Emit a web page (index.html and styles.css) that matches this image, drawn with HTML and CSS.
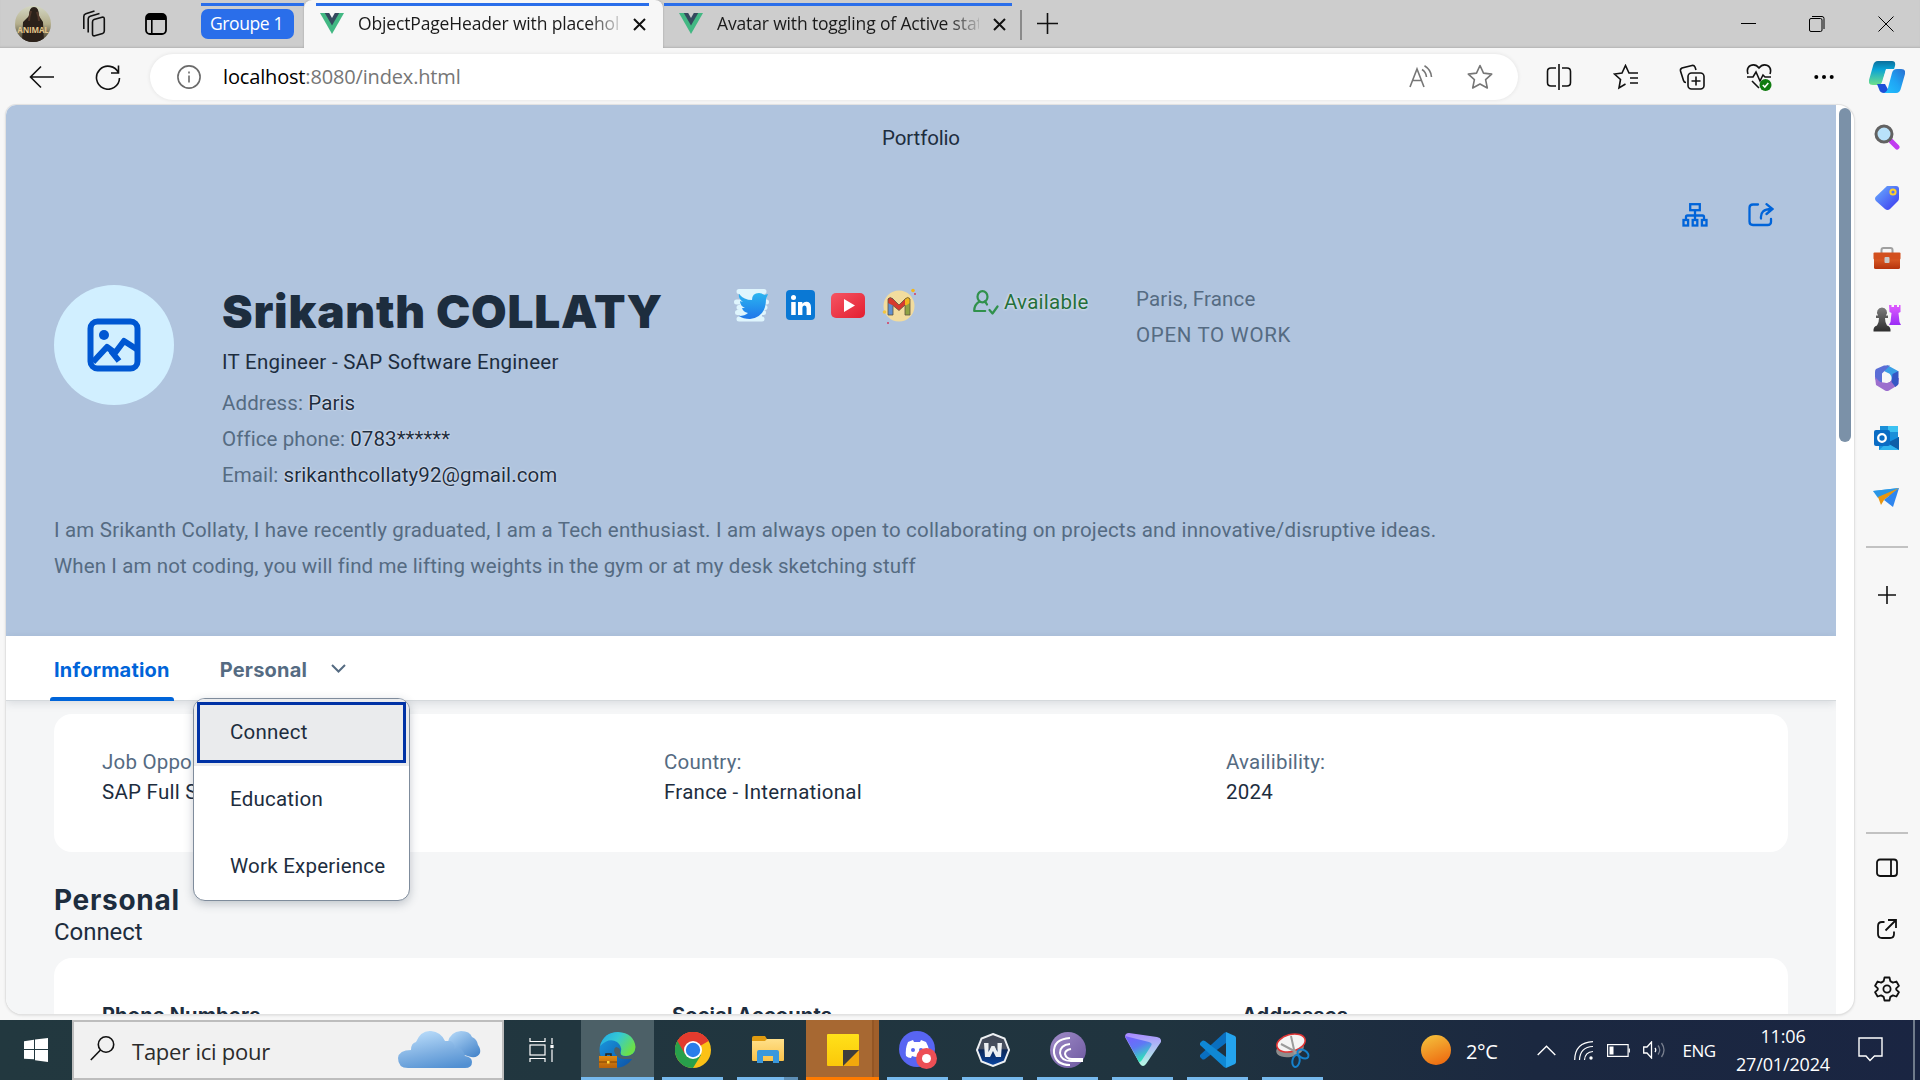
FILE: index.html
```
<!DOCTYPE html>
<html lang="fr">
<head>
<meta charset="utf-8">
<title>ObjectPageHeader with placeholder</title>
<link rel="stylesheet" href="styles.css">
</head>
<body>
<svg class="defs" width="0" height="0">
  <defs>
    <linearGradient id="g-cop1" x1="0" y1="0" x2="0" y2="1"><stop offset="0" stop-color="#0b6f9c"/><stop offset=".35" stop-color="#09a3d6"/><stop offset="1" stop-color="#6fe08a"/></linearGradient>
    <linearGradient id="g-cop2" x1="1" y1="0" x2="0" y2="1"><stop offset="0" stop-color="#2a6fd0"/><stop offset=".5" stop-color="#1fa4f4"/><stop offset="1" stop-color="#22c3ff"/></linearGradient>
    <linearGradient id="g-tag" x1="0" y1="0" x2="1" y2="1"><stop offset="0" stop-color="#6bb2ff"/><stop offset="1" stop-color="#3a35ee"/></linearGradient>
    <linearGradient id="g-box" x1="0" y1="0" x2="0" y2="1"><stop offset="0" stop-color="#e0622a"/><stop offset="1" stop-color="#b5330c"/></linearGradient>
    <linearGradient id="g-pawn" x1="0" y1="0" x2="0" y2="1"><stop offset="0" stop-color="#7c7c7c"/><stop offset="1" stop-color="#2d2d2d"/></linearGradient>
    <linearGradient id="g-rook" x1="0" y1="0" x2="0" y2="1"><stop offset="0" stop-color="#e05bff"/><stop offset="1" stop-color="#9a2cf5"/></linearGradient>
    <linearGradient id="g-edge" x1="0" y1="0" x2="1" y2=".5"><stop offset="0" stop-color="#1fa7e8"/><stop offset=".5" stop-color="#35c9d4"/><stop offset="1" stop-color="#6be04a"/></linearGradient>
    <linearGradient id="g-edge2" x1="0" y1="0" x2="1" y2="1"><stop offset="0" stop-color="#1b9de2"/><stop offset="1" stop-color="#0c4fa5"/></linearGradient>
    <linearGradient id="g-case" x1="0" y1="0" x2="0" y2="1"><stop offset="0" stop-color="#e08a12"/><stop offset="1" stop-color="#b8620a"/></linearGradient>
    <linearGradient id="g-fold" x1="0" y1="0" x2="0" y2="1"><stop offset="0" stop-color="#ffe08a"/><stop offset="1" stop-color="#fbc34a"/></linearGradient>
    <linearGradient id="g-note" x1="0" y1="0" x2="0" y2="1"><stop offset="0" stop-color="#ffe11a"/><stop offset="1" stop-color="#fbc80a"/></linearGradient>
    <linearGradient id="g-bit" x1="0" y1="0" x2="1" y2="1"><stop offset="0" stop-color="#a08cc8"/><stop offset="1" stop-color="#6d58a0"/></linearGradient>
    <linearGradient id="g-vpn" x1="0" y1="0" x2=".5" y2="1"><stop offset="0" stop-color="#7a5cff"/><stop offset=".5" stop-color="#5f78f5"/><stop offset="1" stop-color="#2fe6b8"/></linearGradient>
    <linearGradient id="g-vpn2" x1=".4" y1="0" x2=".5" y2="1"><stop offset="0" stop-color="#a98bff"/><stop offset="1" stop-color="#b5fbe4"/></linearGradient>
    <linearGradient id="g-sun" x1=".3" y1="0" x2=".7" y2="1"><stop offset="0" stop-color="#f4bd3a"/><stop offset="1" stop-color="#ee6a10"/></linearGradient>
    <linearGradient id="g-cloud" x1=".3" y1="0" x2=".7" y2="1"><stop offset="0" stop-color="#b9dcfa"/><stop offset=".55" stop-color="#7fb0e2"/><stop offset="1" stop-color="#5290d2"/></linearGradient>
    <linearGradient id="g-cloud2" x1="0" y1="0" x2=".8" y2="1"><stop offset="0" stop-color="#b9dcfa"/><stop offset="1" stop-color="#4a88cc"/></linearGradient>
    <linearGradient id="g-bird" x1="0" y1="0" x2="0" y2="1"><stop offset="0" stop-color="#2bb5f0"/><stop offset="1" stop-color="#1e76ea"/></linearGradient>
    <linearGradient id="g-tube" x1="0" y1="0" x2="1" y2="1"><stop offset="0" stop-color="#f55563"/><stop offset="1" stop-color="#e31e30"/></linearGradient>
    <linearGradient id="g-photo" x1="0" y1="0" x2="0" y2="1"><stop offset="0" stop-color="#d3d6c2"/><stop offset=".5" stop-color="#b4ae8c"/><stop offset="1" stop-color="#332b1d"/></linearGradient>
    <linearGradient id="g-w" x1="0" y1="0" x2="0" y2="1"><stop offset="0" stop-color="#3d4452"/><stop offset=".45" stop-color="#4a5262"/><stop offset=".5" stop-color="#0b2757"/><stop offset="1" stop-color="#0a47a5"/></linearGradient>
    <clipPath id="c-photo"><circle cx="18" cy="18" r="18"/></clipPath>
  </defs>
</svg>

<div class="tabstrip">
  <div class="cell w66 profile"><svg width="36" height="36"><g clip-path="url(#c-photo)"><rect width="36" height="36" fill="url(#g-photo)"/><path d="M14 10q0-9 5-9t5 9l4 6 1 20H7l1-20z" fill="#2b211a"/><path d="M16 5q-2 6-2 10M22 6q2 5 2 9" stroke="#51372a" stroke-width="2" fill="none"/><text x="18" y="27" text-anchor="middle" class="photo-text">ANIMAL</text></g></svg></div>
  <div class="cell w54"><svg class="ln" width="26" height="28" viewBox="0 0 26 28"><path d="M14 9.500l8-2.300q2.300-.5 2.300 1.800v12q0 1.800-1.700 2.400l-7.800 2.400q-2.300.5-2.300-1.800V12q0-2 1.500-2.500zM8.200 22.500V9q0-2.200 2-2.800l9.300-2.600M3.800 19V6.500q0-2.200 2-2.800L14.500 1"/></svg></div>
  <div class="cell w72"><svg width="22" height="22"><rect x="1" y="1" width="20" height="20" rx="4" fill="none" stroke="#000" stroke-width="1.800"/><path d="M1 7V5a4 4 0 0 1 4-4h12a4 4 0 0 1 4 4v2zM6 7h1.600v14H6z"/></svg></div>
  <div class="group"><span>Groupe 1</span></div>
  <div class="tab active">
    <svg class="vue" width="24" height="21" viewBox="0 0 24 21"><path d="M0 0h24L12 21z" fill="#42b883"/><path d="M4.800 0h14.400L12 12.500z" fill="#35495e"/><path d="M9.200 0h5.600L12 5z" fill="#f7f7f7"/></svg>
    <span class="tab-title">ObjectPageHeader with placeholder</span>
    <svg class="ln" width="13" height="13"><path d="M1 1l11 11M12 1L1 12"/></svg>
  </div>
  <div class="tab">
    <svg class="vue" width="24" height="21" viewBox="0 0 24 21"><path d="M0 0h24L12 21z" fill="#42b883"/><path d="M4.800 0h14.400L12 12.500z" fill="#35495e"/><path d="M9.200 0h5.600L12 5z" fill="#cdcdcd"/></svg>
    <span class="tab-title">Avatar with toggling of Active state</span>
    <svg class="ln" width="13" height="13"><path d="M1 1l11 11M12 1L1 12"/></svg>
  </div>
  <i class="tab-sep"></i>
  <div class="newtab"><svg class="ln" width="21" height="21"><path d="M10.500 0v21M0 10.500h21"/></svg></div>
  <div class="window-buttons">
    <svg width="15" height="16"><path d="M0 7.500h15" stroke="#000"/></svg>
    <svg width="16" height="16" fill="none" stroke="#000"><rect x=".5" y="2.500" width="12.500" height="13" rx="1.500"/><path d="M3 .5h10q2 0 2 2v10.500"/></svg>
    <svg width="16" height="16"><path d="M.5.5l15 15M15.500.5l-15 15" stroke="#000"/></svg>
  </div>
</div>

<div class="toolbar">
  <div class="cell w84"><svg class="ln" width="26" height="24" viewBox="0 0 26 24"><path d="M25 12H1.500M12 1.500L1.500 12 12 22.500"/></svg></div>
  <div class="cell w48"><svg class="ln" width="26" height="26" viewBox="0 0 26 26"><path d="M23.500 9A11.500 11.500 0 1 0 24.500 14M23.500 1.500V9H16"/></svg></div>
  <div class="address">
    <svg width="24" height="24" fill="none" stroke="#6b6b6b" stroke-width="1.600"><circle cx="12" cy="12" r="11.100"/><path d="M12 10.500v7M12 6.500v2"/></svg>
    <span class="url"><b>localhost</b>:8080/index.html</span>
    <svg class="read" width="24" height="24" fill="none" stroke="#767676" stroke-width="1.600"><path d="M1 22L8 4l7 18M3.500 15.500h9M13 4.500q4 2.500 4.500 7.500M15.500.8q6.500 4 7 11.200"/></svg>
    <svg width="26" height="26" viewBox="0 0 26 26" fill="none" stroke="#767676" stroke-width="1.600" stroke-linejoin="round"><path d="M13 1.500l3.500 7.600 8.200 1-6.100 5.600 1.700 8.300L13 20l-7.300 4 1.700-8.300-6.100-5.600 8.200-1z"/></svg>
  </div>
  <div class="tools">
    <svg class="ln" width="26" height="26" viewBox="0 0 26 26"><path d="M13 0v26M10 4H5Q1.500 4 1.500 7.500v11Q1.500 22 5 22h5M16 4h5q3.500 0 3.500 3.500v11Q24.500 22 21 22h-5"/></svg>
    <svg class="ln" width="26" height="26" viewBox="0 0 26 26"><path d="M12.500 20L6 24l1.500-8.500L1.500 10l7.500-1 3.500-7.500L16 9h9M17 14h8M17 19h8"/></svg>
    <svg class="ln" width="26" height="26" viewBox="0 0 26 26"><rect x="9" y="9" width="16" height="16" rx="3.500"/><path d="M17 12.500v9M12.500 17h9M17 6l-1-3q-1-2-3-1.500L3 4Q1 5 1.500 7l3 9.500Q5 18.500 7 18.500"/></svg>
    <svg class="ln" width="26" height="28" viewBox="0 0 26 28"><path d="M2 11Q0 5 4.500 2.500q5-2 8.500 2.500 3.500-4.500 8.500-2.500Q26 5 24 11M1 14h6l3-5 4 9 3-6 2 2h6M6 18l7 7"/><circle cx="19.500" cy="22" r="6" fill="#107c10" stroke="none"/><path d="M16.800 22l2 2 3.500-4" stroke="#fff"/></svg>
    <svg width="20" height="6"><circle cx="2.300" cy="3" r="2"/><circle cx="10" cy="3" r="2"/><circle cx="17.700" cy="3" r="2"/></svg>
  </div>
  <div class="copilot"><svg width="36" height="32" viewBox="0 0 36 32"><path d="M9 0h14q4 0 3 5l-1 3h-8l-4 13q-1 3-4 3H4q-5 0-4-5L4 5q1-5 5-5z" fill="url(#g-cop1)"/><path d="M8 23h8l5 9H15q-4 0-5-4z" fill="#1d4fd8"/><path d="M27 32H15q3-1 4-5l4-15q1-4 5-4h4q5 0 4 5l-4 14q-1 5-5 5z" fill="url(#g-cop2)"/><path d="M17 9h5l-4 14h-5z" fill="#f7f7f7"/></svg></div>
</div>

<div class="main">
  <div class="viewport">
    <div class="page">
      <header class="hero">
        <div class="hero-title">Portfolio</div>
        <div class="hero-actions">
          <svg width="26" height="24" viewBox="0 0 26 24" fill="none" stroke="#0064d9" stroke-width="2.300"><rect x="8.200" y="1.200" width="9.600" height="6"/><path d="M13 7.200v10M4 17v-3q0-1.500 1.500-1.500h15q1.500 0 1.500 1.500v3"/><rect x="1.500" y="17" width="4.600" height="5.500"/><rect x="10.700" y="17" width="4.600" height="5.500"/><rect x="19.900" y="17" width="4.600" height="5.500"/></svg>
          <svg width="26" height="24" viewBox="0 0 26 24" fill="none" stroke="#0064d9" stroke-width="2.300" stroke-linecap="round"><path d="M10 1.500H5q-3.500 0-3.500 3.500v13.500Q1.500 22 5 22h14.500q3.500 0 3.500-3v-3M13 15.500Q12 6 23.500 6M18.500 1.200L24.500 6l-6 5"/></svg>
        </div>
        <div class="hero-body">
          <div class="avatar"><svg width="54" height="54" viewBox="0 0 54 54" fill="none" stroke="#0057d2" stroke-width="6"><rect x="3.500" y="3.500" width="47" height="47" rx="7"/><path d="M6 44l14-15 8 6 9-12 14 9M24 33l8 10" stroke-linejoin="round"/><circle cx="17" cy="17" r="5" fill="#0057d2" stroke="none"/></svg></div>
          <div class="identity">
            <h1>Srikanth COLLATY</h1>
            <p class="job">IT Engineer - SAP Software Engineer</p>
            <p class="attr">Address: <b>Paris</b></p>
            <p class="attr">Office phone: <b>0783******</b></p>
            <p class="attr">Email: <b>srikanthcollaty92@gmail.com</b></p>
          </div>
          <div class="social">
            <svg width="36" height="33" viewBox="0 0 36 33"><path d="M5 2.500h25M8 8h22M2.500 13h30M5 18.500h26M3.500 23.500h26M5 30h23" stroke="#dff5fd" stroke-width="5" stroke-linecap="round"/><path d="M6 2h22v28H6z" fill="#dff5fd"/><path d="M5 5q5 6 13 6 0-7 7-7 3 0 5 2l4-1-2 5q0 18-16 20-7 0-11-3 6 0 9-3-5-1-6-5h3q-5-2-5-7l3 1Q4 10 5 5z" fill="url(#g-bird)"/></svg>
            <svg width="29" height="30"><rect width="29" height="30" rx="4" fill="#0a78d4"/><circle cx="7.500" cy="7.500" r="2.500" fill="#fff"/><path d="M5.200 12h4.500v13H5.200zM12 12h4.300v1.800q1.500-2.100 4-2.100 4.700 0 4.700 5.800V25h-4.400v-6.800q0-2.700-2-2.700-2.200 0-2.200 2.800V25H12z" fill="#fff"/></svg>
            <svg width="34" height="25"><rect width="34" height="25" rx="5" fill="url(#g-tube)"/><path d="M13 6v13l11-6.500z" fill="#fff"/></svg>
            <svg width="34" height="36"><circle cx="17" cy="18" r="15.500" fill="#f2dc9e"/><path d="M6 27V10h5v17z" fill="#5f8fd0"/><path d="M23 27V10h5v17z" fill="#8fa243"/><path d="M6 15v-4q2-3 5 0l6 6 6-6v6l-6 5.500-6-5z" fill="#d63a2e"/><path d="M23 10.500q5-3 5 1V15l-5 3z" fill="#f2b51e"/><path d="M6 27V11q2-3 5 0l6 6 6-6q3-3 5 0v16h-5V17l-6 5.500-6-5V27z" fill="none" stroke="#5d5340" stroke-width=".8"/><circle cx="31" cy="2.500" r="1.800" fill="#f2b51e"/><circle cx="2.500" cy="24" r="1.800" fill="#f2c43e"/><circle cx="33" cy="6" r="1" fill="#d63a5e"/><circle cx="6" cy="35" r="1" fill="#d63a5e"/></svg>
          </div>
          <div class="status"><svg width="26" height="25" viewBox="0 0 26 25" fill="none" stroke="#30914c" stroke-width="2.200" stroke-linecap="round" stroke-linejoin="round"><ellipse cx="9.500" cy="6.800" rx="5" ry="5.600"/><path d="M6.500 11.500Q1.200 14.500 1.200 21h11M14 14.500q-1-2-2.500-3M16.500 20l3 3.500 5-7"/></svg><span>Available</span></div>
          <div class="place"><p>Paris, France</p><p>OPEN TO WORK</p></div>
        </div>
        <div class="bio"><p>I am Srikanth Collaty, I have recently graduated, I am a Tech enthusiast. I am always open to collaborating on projects and innovative/disruptive ideas.</p><p>When I am not coding, you will find me lifting weights in the gym or at my desk sketching stuff</p></div>
      </header>
      <nav class="anchors">
        <a class="selected">Information</a>
        <a>Personal</a>
        <svg width="15" height="9" viewBox="0 0 15 9"><path d="M1 1l6.500 6.500L14 1" fill="none" stroke="#556b82" stroke-width="2"/></svg>
        <div class="menu">
          <div class="menu-item focus">Connect</div>
          <div class="menu-item">Education</div>
          <div class="menu-item">Work Experience</div>
        </div>
      </nav>
      <section class="card facts">
        <div><span>Job Opportunity:</span><b>SAP Full Stack</b></div>
        <div><span>Country:</span><b>France - International</b></div>
        <div><span>Availibility:</span><b>2024</b></div>
      </section>
      <h2>Personal</h2>
      <h3>Connect</h3>
      <section class="card contacts">
        <h4>Phone Numbers</h4><h4>Social Accounts</h4><h4>Addresses</h4>
      </section>
    </div>
    <div class="scroll"><i></i></div>
  </div>

  <aside class="sidebar">
    <div class="slot s60"><svg width="26" height="26" viewBox="0 0 26 26"><path d="M17 17l6 6" stroke="#c13cf0" stroke-width="5" stroke-linecap="round"/><circle cx="10" cy="10" r="8" fill="#b9e2fa" stroke="#626262" stroke-width="3"/></svg></div>
    <div class="slot s60"><svg width="26" height="26" viewBox="0 0 26 26"><path d="M13 1h9q3 0 3 3v9q0 2-1 3l-8 8q-2.500 2-5 0l-9-8q-2-2.500 0-4.500z" fill="url(#g-tag)"/><circle cx="19" cy="7" r="2.600" fill="none" stroke="#ffd02a" stroke-width="2"/></svg></div>
    <div class="slot s60"><svg width="28" height="22" viewBox="0 0 28 22"><path d="M8.500 6V3q0-2 2-2h7q2 0 2 2v3" fill="none" stroke="#a0a0a0" stroke-width="2"/><rect x="1" y="10" width="26" height="12" rx="1.500" fill="url(#g-box)"/><rect x=".5" y="5.500" width="27" height="7" rx="1" fill="#d3501e"/><rect x="11.500" y="10" width="5" height="6" rx="1" fill="#c9c9c9"/></svg></div>
    <div class="slot s60"><svg width="28" height="28" viewBox="0 0 28 28"><path d="M16 1h2.500v2H21V1h3v2h2V1h1.500v7l-2 1 1 9 1.500 3h-12l1.500-3 1-9-2-1z" fill="url(#g-rook)"/><path d="M9 3.500a5 5 0 0 1 4 8h2v2.500h-3q0 5 2 7.500 4 1 3.500 6h-17q-.5-5 3.500-6 2-2.500 2-7.500H3v-2.500h2a5 5 0 0 1 4-8z" fill="url(#g-pawn)"/></svg></div>
    <div class="slot s60"><svg width="26" height="28" viewBox="0 0 26 28"><path d="M13 1l11 6v7l-7 2-1-6-6-3z" fill="#3ba0e6"/><path d="M10 1.500h6l-8 8v10L2 16Q1 15 1 13V8q0-2 1-3z" fill="#5b6ed6"/><path d="M1 13l1 8 9 5.500q2 1 4 0l9-5.500 1-7-6 1-6 4-7-1z" fill="#9c6fce"/><path d="M24.500 7v13l-3 3-4-5 1-8z" fill="#3557c4"/><circle cx="13" cy="14" r="4.600" fill="#f7f7f7"/></svg></div>
    <div class="slot s60"><svg width="26" height="26" viewBox="0 0 26 26"><path d="M6 1h18v12H6z" fill="#1b8fd8"/><path d="M14 1h10v6H14z" fill="#3cc2f2"/><path d="M5 12h20v13H5z" fill="#1490df"/><path d="M25 12v13L13 18z" fill="#0f5fa8"/><path d="M5 25h20l-12-7z" fill="#2fb4ef"/><rect y="5" width="16" height="16" rx="2" fill="#0a6cc4"/><circle cx="8" cy="13" r="3.800" fill="none" stroke="#fff" stroke-width="2.300"/></svg></div>
    <div class="slot s60"><svg width="27" height="20" viewBox="0 0 27 20"><path d="M0 3L26 0l-8 9z" fill="#36a8ee"/><path d="M0 3l26-3L5 10z" fill="#2a96e6"/><path d="M26 0L5 9l3 8 3-5z" fill="#e9960f"/><path d="M26 0L11 12l9 7z" fill="#2f86ee"/></svg></div>
    <hr>
    <div class="slot add"><svg class="ln" width="18" height="18"><path d="M9 0v18M0 9h18"/></svg></div>
    <hr class="low">
    <div class="slot first"><svg class="ln thick" width="22" height="20"><rect x="1" y="1.500" width="20" height="16.500" rx="3"/><path d="M15 1.500V18"/></svg></div>
    <div class="slot s60"><svg class="ln thick" width="20" height="20"><path d="M7.500 3H5Q1 3 1 7v8q0 4 4 4h8q4 0 4-4v-2.500M11 1h8v8M19 1L8.500 11.500"/></svg></div>
    <div class="slot s60"><svg class="ln thick" width="26" height="26" viewBox="0 0 26 26"><path d="M10.500 1.500h5l.8 3.600 2.600 1.500 3.500-1.100 2.500 4.300-2.700 2.600v1.200l2.700 2.600-2.500 4.300-3.500-1.100-2.600 1.500-.8 3.600h-5l-.8-3.600-2.600-1.500-3.500 1.100-2.500-4.300 2.700-2.600v-1.200L1.100 9.800l2.500-4.300 3.500 1.100 2.600-1.500z" stroke-linejoin="round"/><circle cx="13" cy="13" r="3.600"/></svg></div>
  </aside>
</div>

<footer class="taskbar">
  <div class="start"><svg width="24" height="24" viewBox="0 0 24 24" fill="#fff"><path d="M0 3.200L10 1.800V11H0zM11 1.600L24 0v11H11zM0 12h10v9.200L0 20.800zM11 12h13v12l-13-1.800z"/></svg></div>
  <div class="search">
    <svg width="25" height="25" viewBox="0 0 25 25" fill="none" stroke="#111" stroke-width="1.600"><circle cx="16" cy="8.500" r="7.700"/><path d="M10.500 14L.8 24"/></svg>
    <span>Taper ici pour</span>
    <svg width="84" height="40" viewBox="0 0 84 40"><path d="M50 12q2-10 13-11 9 0 11 6 5 2 6 8 3 4 2 8-2 5-9 4l-20-6z" fill="url(#g-cloud2)"/><path d="M10 38Q0 38 0 28q1-8 13-8 0-7 5-8Q23 0 33 1q10 1 14 10h6q5 4 3 8 8-4 11 7 7 1 7 6 0 6-7 6z" fill="url(#g-cloud)"/></svg>
  </div>
  <div class="task view"><svg width="25" height="24" fill="none" stroke="#fff" stroke-width="1.200"><rect x="1" y="7" width="15" height="10"/><path d="M1 0v3.500h15V0M1 24v-3.500h15V24M23 0v6M23 11.500V24"/><rect x="22" y="7.500" width="2" height="2" fill="#fff"/></svg></div>
  <div class="task on"><svg width="37" height="37" viewBox="0 0 37 37"><circle cx="18" cy="18" r="17.500" fill="url(#g-edge2)"/><path d="M1 14Q5 0 19 0q16 1 17.500 15Q36 24 27 24q-7 0-5-5 1-5-4-9-8-5-17 4z" fill="url(#g-edge)"/><path d="M36 27H24q-7-1-9-8 0-3 2-4 5 1 4 5 0 6 9 4l5-3z" fill="#4c6067"/><path d="M7 24v-2h5v2" stroke="#2e2414" stroke-width="1.500" fill="none"/><rect y="24" width="18" height="12" fill="url(#g-case)"/><path d="M0 30h18" stroke="#7a4206"/><rect x="8" y="29" width="2.500" height="2.500" fill="#ffd83a"/></svg></div>
  <div class="task run"><svg width="36" height="36" viewBox="0 0 36 36"><circle cx="18" cy="18" r="18" fill="#fbc116"/><path d="M18 18L2.400 9A18 18 0 0 1 33.600 9z" fill="#e33b2e"/><path d="M18 18v-9L2.400 9A18 18 0 0 0 18 36l8-13z" fill="#28a04b"/><path d="M18 9h15.600A18 18 0 0 0 2.400 9L10 22z" fill="#e33b2e"/><circle cx="18" cy="18" r="9" fill="#fff"/><circle cx="18" cy="18" r="7.200" fill="#2b7de9"/></svg></div>
  <div class="task run split"><svg width="32" height="28" viewBox="0 0 32 28"><path d="M0 2q0-2 2-2h11l2 3v5H0z" fill="#e09b10"/><path d="M0 5h13l2-2h17v21q0 1-1 1H1q-1 0-1-1z" fill="url(#g-fold)"/><path d="M5 27V16q0-2 2-2h18q2 0 2 2v11h-6v-7H11v7z" fill="#3a98dd"/></svg></div>
  <div class="task alert"><svg width="32" height="32" viewBox="0 0 32 32"><path d="M1 0h30q1 0 1 1v15L16 32H1q-1 0-1-1V1q0-1 1-1z" fill="url(#g-note)"/><path d="M16 32h15q1 0 1-1V16z" fill="#f2a80c"/><path d="M16 32V16h16z" fill="#3d3d3d"/></svg></div>
  <div class="task run"><svg width="38" height="38" viewBox="0 0 38 38"><circle cx="18" cy="18" r="18" fill="#5865f2"/><path d="M9 11l5-2 1 2h6l1-2 5 2q4 7 3 14-3 2-6 2l-1-2q-5 2-10 0l-1 2q-3 0-5-2-1-7 2-14z" fill="#fff"/><circle cx="14" cy="19" r="2" fill="#5865f2"/><circle cx="22" cy="19" r="2" fill="#5865f2"/><circle cx="27.500" cy="27.500" r="10.500" fill="#ed4f55"/><circle cx="27.500" cy="27.500" r="4.500" fill="#fff"/></svg></div>
  <div class="task run"><svg width="34" height="34" viewBox="0 0 34 34"><path d="M17 1l11.500 4.500L33 17l-4.500 11.500L17 33 5.500 28.500 1 17 5.500 5.500z" fill="url(#g-w)" stroke="#eceff2" stroke-width="2"/><path d="M8 10h4.500v9l3-6h3l3 6v-9H26l-1 14h-5l-3-6-3 6H9z" fill="#eceff2"/></svg></div>
  <div class="task run"><svg width="36" height="36" viewBox="0 0 36 36"><circle cx="18" cy="18" r="18" fill="url(#g-bit)"/><path d="M20 6Q3 7 4 21q2 12 16 12M20 12q-10 1-10 9 1 8 11 8h12M21 17q-6 1-6 5 1 5 7 5h11" fill="none" stroke="#fff" stroke-width="2"/></svg></div>
  <div class="task run"><svg width="36" height="34" viewBox="0 0 36 34"><path d="M0 4Q0 0 4 0l28 4q5 1 4 5L21 31q-3 4-6 0z" fill="url(#g-vpn2)"/><path d="M0 3l24 6q4 1 2 4L17 27q-1 2-3 2z" fill="url(#g-vpn)"/></svg></div>
  <div class="task run"><svg width="36" height="36" viewBox="0 0 36 36"><path d="M26 0l-2 1L0 23q-1 2 0 2l2 2q1 1 3 0L26 11z" fill="#0a6fbf"/><path d="M26 36l-2-1L0 13q-1-2 0-2l2-2q1-1 3 0L26 25z" fill="#0f88d4"/><path d="M26 0l9 4q1 1 1 2v24q0 1-1 2l-9 4z" fill="#24a4ee"/></svg></div>
  <div class="task run"><svg width="36" height="36" viewBox="0 0 36 36"><ellipse cx="15" cy="17" rx="14" ry="8" fill="#8d8d8d" transform="rotate(-12 15 17)"/><ellipse cx="16" cy="11" rx="14.500" ry="8.500" fill="#f4f4f4" stroke="#e03434" stroke-width="1.600" transform="rotate(-15 16 11)"/><path d="M6 12l17 9M16 4l4 18" stroke="#9b9b9b" stroke-width="2"/><ellipse cx="28" cy="22" rx="6" ry="3.800" transform="rotate(30 28 22)" fill="none" stroke="#1581cc" stroke-width="2"/><ellipse cx="21" cy="29" rx="3.600" ry="6" transform="rotate(10 21 29)" fill="none" stroke="#1581cc" stroke-width="2"/></svg></div>
  <div class="tray">
    <div class="cell w48"><svg width="30" height="30"><circle cx="15" cy="15" r="15" fill="url(#g-sun)"/></svg></div>
    <span class="temp">2°C</span>
    <div class="cell w40"><svg width="19" height="11" fill="none" stroke="#fff" stroke-width="1.400"><path d="M.7 10L9.500 1.200 18.300 10"/></svg></div>
    <div class="cell w34"><svg width="19" height="19" fill="none" stroke="#fff" stroke-width="1.200"><path d="M.7 19Q1 1.500 19 .7M5.500 19Q6 6 19 5.500M10.500 19q.5-8 8.500-8.500"/><circle cx="17" cy="17" r="1.700" fill="#fff" stroke="none"/></svg></div>
    <div class="cell w37"><svg width="23" height="13" fill="none" stroke="#fff" stroke-width="1.200"><rect x=".6" y=".6" width="20.500" height="11.800"/><path d="M22.300 4.500v4"/><rect x="2.500" y="2.500" width="4" height="8" fill="#fff" stroke="none"/></svg></div>
    <div class="cell w35"><svg width="23" height="18" fill="none" stroke="#fff" stroke-width="1.300"><path d="M.7 6H4l4.500-5v16L4 12H.7zM12 7q1.500 2 0 4"/><path d="M15 4.500q3.500 4.500 0 9M18.500 2q5 7 0 14" opacity=".4"/></svg></div>
    <span class="lang">ENG</span>
    <div class="clock"><span>11:06</span><span>27/01/2024</span></div>
    <div class="cell w60"><svg width="25" height="26" fill="none" stroke="#fff" stroke-width="1.400"><path d="M1 1h23v18h-7.500l-4.500 4.500L8 19H1z"/></svg></div>
    <i class="peek"></i>
  </div>
</footer>
</body>
</html>
```
FILE: styles.css
```
* { box-sizing: border-box; margin: 0; padding: 0; }
body { width: 1920px; height: 1080px; overflow: hidden; display: flex; flex-direction: column; background: #f7f7f7; font: 20.5px/36px Roboto, sans-serif; letter-spacing: .2px; color: #1d2d3e; }
svg { display: block; flex: none; }
.defs { position: absolute; }
.ln { fill: none; stroke: #111; stroke-width: 1.6; }
.thick { stroke-width: 1.8; }
.cell { display: flex; align-items: center; justify-content: center; flex: none; }
.w34 { width: 34px; } .w35 { width: 35px; } .w37 { width: 37px; } .w40 { width: 40px; } .w48 { width: 48px; }
.w54 { width: 54px; } .w60 { width: 60px; } .w66 { width: 66px; } .w72 { width: 72px; } .w84 { width: 84px; }

/* Tab strip */
.tabstrip { height: 48px; flex: none; display: flex; background: #cdcdcd; font: 17.5px/24px "Open Sans", sans-serif; letter-spacing: -.15px; color: #1b1b1b; box-shadow: inset 0 -2px 2px -1px #b3b3b3; }
.photo-text { font: 700 8px "Open Sans", sans-serif; fill: #e2c58a; }
.group { margin-left: 9px; width: 103px; border-top: 3px solid #2a6eea; margin-top: 3px; padding-top: 3px; }
.group span { display: block; width: 93px; height: 30px; border-radius: 7px; background: #2a6eea; color: #fff; text-align: center; line-height: 29px; letter-spacing: -.4px; padding-right: 2px; }
.tab { width: 349px; display: flex; align-items: center; padding: 0 6px 2px 16px; position: relative; flex: none; }
.tab::before { content: ""; position: absolute; left: 1px; right: 0; top: 3px; height: 3px; background: #2a6eea; }
.tab.active { width: 359px; background: #f7f7f7; border-radius: 8px 8px 0 0; padding-right: 17px; box-shadow: 0 0 2px #999; clip-path: inset(0 -3px 0 -3px); }
.tab.active::before { left: 12px; right: 14px; }
.tab-title { width: 262px; margin-left: 14px; overflow: hidden; white-space: nowrap; -webkit-mask-image: linear-gradient(90deg, #000 230px, transparent 268px); mask-image: linear-gradient(90deg, #000 230px, transparent 268px); }
.tab .ln { margin: 2px 0 0 auto; stroke-width: 2; }
.tab-sep { width: 2px; height: 30px; margin: 10px 15px 0 8px; background: #8a8a8a; flex: none; }
.newtab { padding-top: 13px; }
.window-buttons { margin-left: auto; display: flex; gap: 53px; align-items: center; padding-right: 26px; }

/* Toolbar */
.toolbar { height: 57px; flex: none; display: flex; align-items: center; background: #f7f7f7; }
.address { width: 1368px; height: 46px; margin: 1px 0 0 18px; border-radius: 23px; background: #fff; box-shadow: 0 0 4px rgba(0,0,0,.09); display: flex; align-items: center; padding: 0 25px 0 27px; }
.url { font: 20px/28px "Open Sans", sans-serif; letter-spacing: -.16px; color: #767676; margin-left: 22px; flex: 1; }
.url b { font-weight: 400; color: #000; }
.read { margin-right: 34px; }
.tools { display: flex; align-items: center; margin-left: 28px; width: 288px; justify-content: space-between; }
.tools svg:nth-child(3), .tools svg:nth-child(4) { margin: 0 1px 0 -1px; }
.copilot { margin-left: 35px; }

/* Browser content */
.main { flex: 1; min-height: 0; display: flex; }
.viewport { margin: 0 0 6px 6px; width: 1848px; display: flex; background: #fff; border-radius: 10px 16px 16px 16px; overflow: hidden; box-shadow: 0 0 0 1px #e2e2e2, 0 1px 3px #ccc; }
.page { width: 1830px; background: #f5f6f7; overflow: hidden; }
.scroll { width: 18px; padding: 3px; }
.scroll i { display: block; width: 12px; height: 334px; border-radius: 6px; background: #7b91a8; }

.hero { height: 531px; background: #b0c4de; padding: 0 48px; }
.hero-title { height: 66px; line-height: 66px; text-align: center; letter-spacing: -.15px; }
.hero-actions { height: 88px; display: flex; justify-content: flex-end; align-items: center; gap: 40px; padding-right: 14px; }
.hero-body { display: flex; margin-top: 26px; height: 208px; }
.avatar { width: 120px; height: 120px; border-radius: 50%; background: #d1efff; display: flex; align-items: center; justify-content: center; margin-right: 48px; flex: none; }
.identity { width: 512px; flex: none; }
h1 { font: 900 46px/52px Inter, sans-serif; letter-spacing: .76px; white-space: nowrap; }
.job { line-height: 32px; margin: 9px 0 7px; letter-spacing: .26px; }
.attr, .bio, .place { color: #556b82; }
.attr { letter-spacing: .1px; }
.attr b { font-weight: 400; color: #1d2d3e; text-shadow: 0 0 2px #fff; }
.social { width: 239px; height: 38px; margin-top: 1px; display: flex; align-items: center; gap: 16px; }
.social svg:last-child { margin: 1px 0 0 1px; }
.status { width: 163px; height: 36px; display: flex; gap: 5px; align-items: center; color: #256f3a; text-shadow: 0 0 3px #fff; letter-spacing: .25px; margin-top: -1px; }
.place { margin-top: -4px; letter-spacing: .17px; }
.place p + p { letter-spacing: .68px; }
.bio { margin-top: 19px; white-space: nowrap; letter-spacing: .18px; }
.bio p + p { letter-spacing: .11px; }

.anchors { height: 64px; background: #fff; position: relative; display: flex; align-items: center; padding: 3px 0 0 48px; box-shadow: 0 1px 0 #d5d9dc, 0 3px 9px rgba(34,53,72,.14); }
.anchors a { font: 700 20px/24px Inter, sans-serif; letter-spacing: .2px; color: #556b82; margin-right: 24px; }
.anchors .selected { color: #0064d9; margin-right: 50px; position: relative; }
.selected::after { content: ""; position: absolute; left: -4px; right: -4px; bottom: -19px; height: 4px; border-radius: 3px 3px 0 0; background: #0064d9; }
.anchors > svg { margin-top: -2px; }
.menu { position: absolute; left: 187px; top: 62px; width: 217px; height: 203px; border: 1px solid #7f8c9c; border-radius: 12px; background: #fff; overflow: hidden; box-shadow: 0 3px 10px rgba(34,53,72,.25); z-index: 2; }
.menu-item { height: 67px; padding: 0 36px; line-height: 67px; white-space: nowrap; letter-spacing: .23px; }
.focus { background: #eaebed; position: relative; }
.focus::after { content: ""; position: absolute; inset: 3px; border: 3px solid #0032a5; }
.card { margin: 0 48px; background: #fff; border-radius: 18px; }
.facts { margin-top: 14px; height: 138px; padding: 33px 48px; display: grid; grid-template-columns: repeat(3, 562px); line-height: 30px; }
.facts span { display: block; color: #556b82; }
.facts b { font-weight: 400; display: block; letter-spacing: .26px; }
h2 { margin: 30px 48px 0; font: 700 28px/36px Inter, sans-serif; letter-spacing: .7px; }
h3 { margin-left: 48px; font-size: 24px; font-weight: 400; line-height: 28px; letter-spacing: -.05px; }
.contacts { margin-top: 12px; height: 200px; padding: 45px 48px; display: grid; grid-template-columns: repeat(3, 570px); }
h4 { font: 700 20px/24px Inter, sans-serif; letter-spacing: .15px; }

/* Edge sidebar */
.sidebar { width: 66px; display: flex; flex-direction: column; align-items: center; padding: 2px 1px 0 0; }
.slot { height: 60px; flex: none; display: flex; align-items: center; justify-content: center; }
.slot + .slot { padding-top: 2px; }
.sidebar hr { width: 42px; height: 2px; border: 0; background: #c2c2c2; margin: 19px 0 17px; flex: none; }
.sidebar .low { margin: 207px 0 4px; }

/* Taskbar */
.taskbar { height: 60px; flex: none; display: flex; background: linear-gradient(90deg, #22383f, #20343f 60%, #1b2840 80%, #1a2542); color: #fff; font-family: "Open Sans", sans-serif; }
.start { width: 72px; padding: 18px 0 0 24px; }
.search { width: 432px; height: 60px; border: 2px solid #bdbdbd; background: #f1f1f1; display: flex; align-items: center; padding: 0 20px 0 16px; font-size: 22px; letter-spacing: -.24px; color: #2b2b2b; }
.search svg:first-child { margin-top: -4px; }
.search span { margin-left: 17px; flex: 1; padding-top: 2px; }
.task { width: 75px; flex: none; display: flex; align-items: center; justify-content: center; position: relative; }
.view { width: 76px; padding-right: 2px; }
.task.on { background: #4c6067; box-shadow: inset 0 -3px #76b9ed; width: 73px; margin: 0 1px; }
.run::after { content: ""; position: absolute; left: 7px; right: 7px; bottom: 0; height: 3px; background: #76b9ed; }
.split::after { background: linear-gradient(90deg, #76b9ed 47px, #5d8fb6 47px); }
.alert { width: 73px; margin: 0 1px; background: linear-gradient(90deg, #a76832 66px, #935625 66px, #935625 68px, #a05f2b 68px); box-shadow: inset 0 -3px #ff7b00; }
.tray { margin-left: auto; display: flex; align-items: center; height: 60px; font-size: 18px; letter-spacing: 0; }
.temp { width: 60px; margin-right: 6px; padding: 3px 0 0 6px; font-size: 20px; letter-spacing: -.4px; }
.lang { width: 54px; text-align: center; font-size: 17px; letter-spacing: -.6px; padding-top: 1px; }
.clock { width: 114px; text-align: center; line-height: 28px; letter-spacing: -.15px; }
.clock span { display: block; }
.peek { width: 7px; height: 60px; margin-left: 13px; border-left: 2px solid #6f7b8b; }
```
